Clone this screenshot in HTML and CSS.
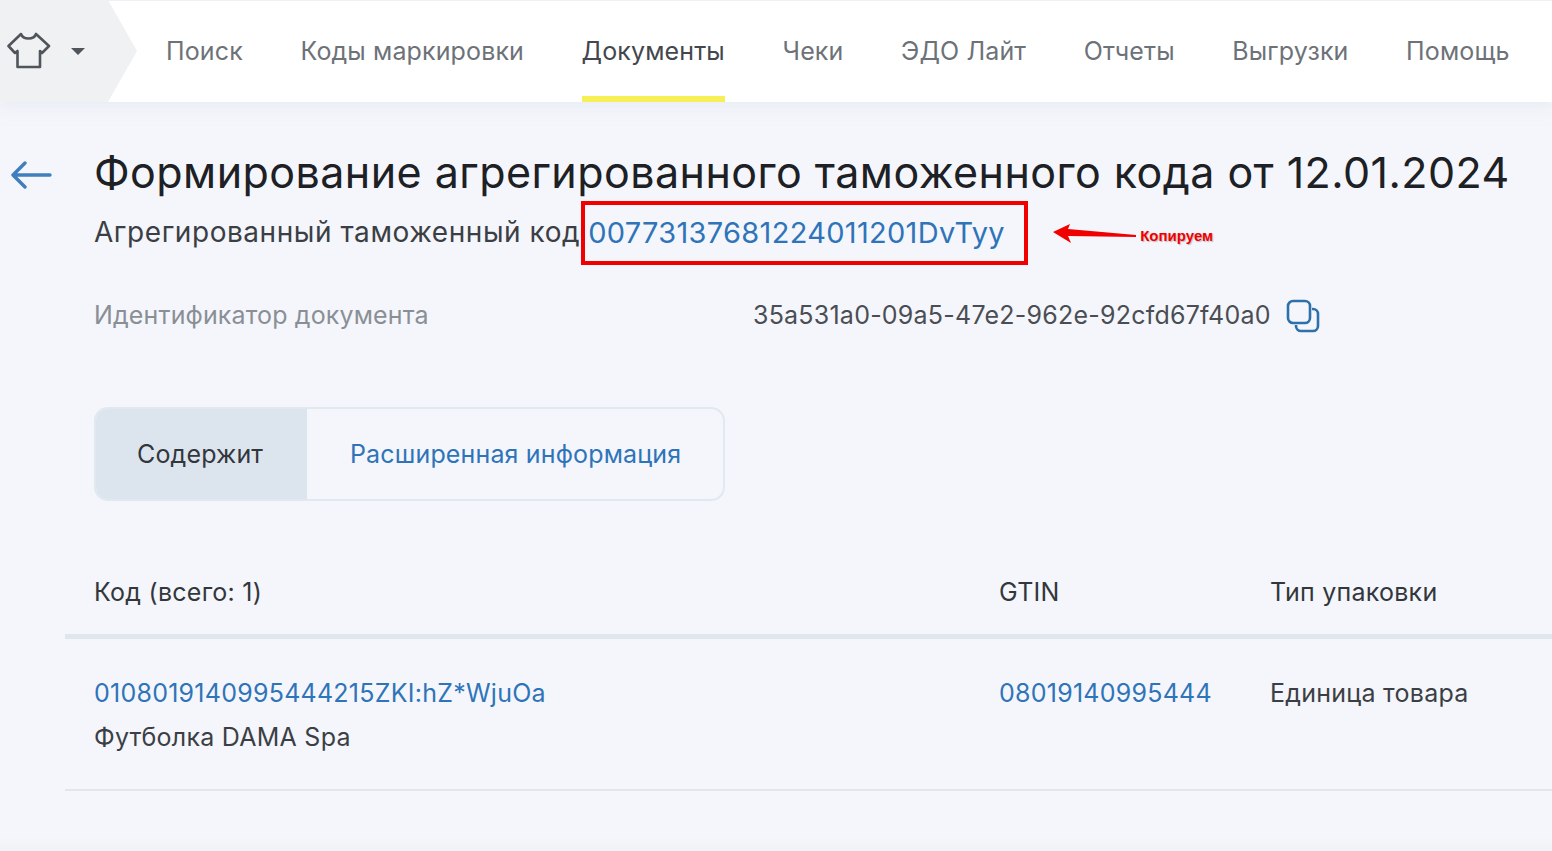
FILE: index.html
```html
<!DOCTYPE html>
<html lang="ru">
<head>
    <meta charset="UTF-8">
    <title>Формирование агрегированного таможенного кода</title>
    <link rel="stylesheet" href="styles.css">
</head>
<body>
<header class="top_bar">
    <div class="brand">
        <svg class="brand_icon" width="44" height="38" viewBox="0 0 44 38" fill="none" stroke="#50555c" stroke-width="2.6" stroke-linejoin="round">
            <path d="M14 2 L1.5 14 L8 21 L10.5 19 V35 H33 V19 L35 21 L42 14 L29 2 C27 8 16 8 14 2 Z"/>
        </svg>
        <span class="brand_caret"></span>
    </div>
    <nav class="nav">
        <a class="nav_item">Поиск</a>
        <a class="nav_item">Коды маркировки</a>
        <a class="nav_item nav_active">Документы</a>
        <a class="nav_item">Чеки</a>
        <a class="nav_item">ЭДО Лайт</a>
        <a class="nav_item">Отчеты</a>
        <a class="nav_item">Выгрузки</a>
        <a class="nav_item">Помощь</a>
    </nav>
</header>

<main class="page">
    <div class="title_row">
        <svg class="back" width="42" height="32" viewBox="0 0 42 32" fill="none" stroke="#3f7fbd" stroke-width="3.4" stroke-linecap="round" stroke-linejoin="round">
            <path d="M2 16 H39 M14 4 L2 16 L14 28"/>
        </svg>
        <h1 class="title">Формирование агрегированного таможенного кода от 12.01.2024</h1>
    </div>

    <div class="code_row">
        <span class="code_label">Агрегированный таможенный код</span>
        <a class="code_value">00773137681224011201DvTyy</a>
        <div class="note">
            <svg class="note_arrow" width="84" height="20" viewBox="0 0 84 20">
                <path d="M0 9 L17 1 L15 6 L83 12 V14 L15 13 L18 20 Z" fill="#f00000"/>
            </svg>
            <span class="note_text">Копируем</span>
        </div>
    </div>

    <div class="doc_row">
        <span class="doc_label">Идентификатор документа</span>
        <span class="doc_value">35a531a0-09a5-47e2-962e-92cfd67f40a0</span>
        <svg class="copy" width="34" height="34" viewBox="0 0 34 34" fill="none" stroke="#2f70ab" stroke-width="2.6">
            <rect x="2" y="2" width="22" height="22" rx="5"/>
            <path d="M26 10 H27 A5 5 0 0 1 32 15 V27 A5 5 0 0 1 27 32 H15 A5 5 0 0 1 10 27 V26"/>
        </svg>
    </div>

    <div class="tabs">
        <div class="tab tab_active">Содержит</div>
        <div class="tab">Расширенная информация</div>
    </div>

    <div class="grid grid_head">
        <div>Код (всего: 1)</div>
        <div>GTIN</div>
        <div>Тип упаковки</div>
    </div>
    <div class="grid grid_row">
        <div>
            <a class="link">0108019140995444215ZKI:hZ*WjuOa</a>
            <p class="product">Футболка DAMA Spa</p>
        </div>
        <div><a class="link">08019140995444</a></div>
        <div>Единица товара</div>
    </div>
</main>
</body>
</html>
```

FILE: styles.css
```css
* {
    margin: 0;
    padding: 0;
    box-sizing: border-box;
}

html, body {
    height: 100%;
}

body {
    background: linear-gradient(to bottom, #f4f6fb calc(100% - 14px), #f1f2f5 100%);
    font-family: "Inter", "Liberation Sans", sans-serif;
    color: #3b3f45;
    overflow: hidden;
}

a {
    color: #2f74b8;
}

.top_bar {
    height: 102px;
    background-color: white;
    display: flex;
    box-shadow: inset 0 1px 0 #eef0f6, 0 6px 12px rgba(225, 230, 240, 0.5);
}

.brand {
    width: 137px;
    height: 102px;
    background-color: #f0f1f3;
    clip-path: polygon(0 0, 108px 0, 137px 51px, 108px 102px, 0 102px);
    display: flex;
    align-items: center;
    padding-left: 7px;
}

.brand_caret {
    margin-left: 20px;
    border-left: 7px solid transparent;
    border-right: 7px solid transparent;
    border-top: 7px solid #50555c;
}

.nav {
    display: flex;
    gap: 57.6px;
    margin-left: 29px;
}

.nav_item {
    height: 102px;
    line-height: 102px;
    font-size: 25px;
    letter-spacing: 0.13px;
    color: #6d7278;
}

.nav_active {
    color: #43474d;
    border-bottom: 6px solid #f6ef55;
}

.page {
    padding-left: 94px;
}

.title_row {
    position: relative;
    margin-top: 44px;
}

.back {
    position: absolute;
    left: -83px;
    top: 13px;
}

.title {
    font-size: 43px;
    line-height: 52px;
    font-weight: 400;
    letter-spacing: 0.45px;
    color: #1d2024;
    white-space: nowrap;
}

.code_row {
    display: flex;
    align-items: center;
    height: 64px;
    margin-top: 3px;
    font-size: 28px;
}

.code_label {
    color: #3b3f45;
    letter-spacing: 0.55px;
    margin-bottom: 2px;
}

.code_value {
    margin-left: 1px;
    width: 447px;
    height: 64px;
    line-height: 56px;
    padding-left: 3px;
    border: 4px solid #f00000;
    font-size: 29px;
    letter-spacing: 0.3px;
    white-space: nowrap;
}

.note {
    display: flex;
    align-items: center;
    margin-left: 25px;
}

.note_text {
    margin-left: 3px;
    margin-top: 5px;
    color: #f00000;
    font-family: "Liberation Sans", sans-serif;
    font-size: 15px;
    font-weight: 700;
    text-shadow: 1px 1px 1px #b9bcc4;
}

.doc_row {
    display: flex;
    align-items: center;
    margin-top: 17px;
    height: 66px;
    font-size: 25px;
    letter-spacing: 0.14px;
}

.doc_label {
    width: 659px;
    color: #8a8f96;
}

.doc_value {
    color: #4a4e54;
    letter-spacing: 0.23px;
}

.copy {
    margin-left: 15px;
    margin-top: 2px;
}

.tabs {
    display: flex;
    width: 631px;
    height: 94px;
    margin-top: 59px;
    border: 2px solid #e2e8f0;
    border-radius: 14px;
    overflow: hidden;
    font-size: 25px;
    letter-spacing: 0.15px;
}

.tab {
    display: flex;
    align-items: center;
    padding: 0 0 0 43px;
    color: #2f74b8;
    white-space: nowrap;
}

.tab_active {
    width: 211px;
    padding: 0 0 0 41px;
    background-color: #dce5ee;
    color: #33373c;
}

.grid {
    display: grid;
    grid-template-columns: 905px 271px 1fr;
    margin-left: -29px;
    padding-left: 29px;
    font-size: 25px;
    letter-spacing: 0.25px;
}

.grid_head {
    height: 138px;
    padding-top: 76px;
    border-bottom: 5px solid #dfe6ee;
    color: #33373c;
}

.grid_row {
    height: 152px;
    padding-top: 39px;
    border-bottom: 2px solid #e2e6ec;
}

.product {
    margin-top: 14px;
}
```
